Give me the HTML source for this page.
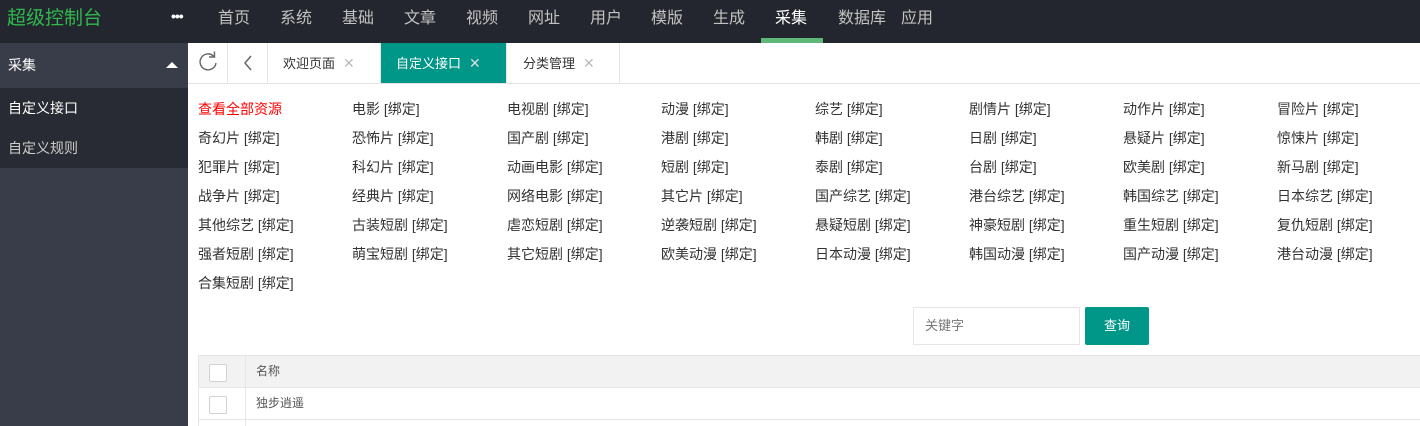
<!DOCTYPE html>
<html><head><meta charset="utf-8"><style>
*{margin:0;padding:0;box-sizing:border-box}
html,body{width:1420px;height:426px;overflow:hidden}
body{background:#fff;font-family:"Liberation Sans","Noto Sans CJK SC",sans-serif;position:relative}
.hd{position:absolute;left:0;top:0;width:1420px;height:43px;background:#23262e}
.logo{position:absolute;left:7px;top:3px;color:#2fb84d;font-size:19px}
.dots{position:absolute;left:171px;top:8px;color:#fff;font-size:14px;font-weight:bold;letter-spacing:-1px}
.nav{position:absolute;top:4px;color:#c2c2c2;font-size:16px}
.nav.on{color:#fff}
.ul{position:absolute;left:761px;top:38px;width:62px;height:5px;background:#5fb878}
.sb{position:absolute;left:0;top:43px;width:188px;height:383px;background:#393d49}
.sb .t{height:45px;color:#fff;font-size:14px;line-height:45px;padding-left:8px;position:relative}
.tri{position:absolute;right:10px;top:19px;width:0;height:0;border-left:6px solid transparent;border-right:6px solid transparent;border-bottom:6px solid #fff}
.sb .sub{background:#282b33;height:80px}
.sb .sub div{height:40px;line-height:40px;padding-left:8px;color:#fff;font-size:14px}
.sb .sub div+div{color:#ccc}
.tabs{position:absolute;left:188px;top:43px;width:1232px;height:41px;border-bottom:1px solid #e2e2e2}
.tb{position:absolute;top:0;height:40px;border-right:1px solid #e6e6e6;font-size:13px;color:#333;line-height:40px}
.tb .x{color:#bbb;font-size:14px;margin-left:8px}
.tb.on{background:#009688;color:#fff}
.tb.on .x{color:#ddd}
.g{position:absolute;font-size:14px;color:#333;white-space:nowrap}
.inp{position:absolute;left:913px;top:307px;width:167px;height:38px;border:1px solid #e6e6e6;font-size:13px;color:#777;line-height:36px;padding-left:11px}
.btn{position:absolute;left:1085px;top:307px;width:64px;height:38px;background:#009688;color:#fff;font-size:13px;line-height:38px;text-align:center;border-radius:2px}
.tbl{position:absolute;left:198px;top:355px;width:1222px;height:71px;overflow:hidden;border-top:1px solid #e6e6e6;border-left:1px solid #e6e6e6}
.row{height:32px;border-bottom:1px solid #e6e6e6;position:relative;font-size:12px;color:#555;line-height:31px}
.row.h{background:#f2f2f2}
.row .c{position:absolute;left:0;top:0;width:47px;height:31px;border-right:1px solid #e6e6e6}
.row .c i{position:absolute;left:10px;top:8px;width:18px;height:18px;border:1px solid #d2d2d2;background:#fff;border-radius:2px}
.row span{position:absolute;left:57px}
.row.last{height:7px;border-bottom:none}
.row.last .c{height:7px}
</style></head><body>
<div class="hd">
<div class="logo">超级控制台</div>
<div class="dots">•••</div>
<div class="nav" style="left:218px">首页</div>
<div class="nav" style="left:280px">系统</div>
<div class="nav" style="left:342px">基础</div>
<div class="nav" style="left:404px">文章</div>
<div class="nav" style="left:466px">视频</div>
<div class="nav" style="left:528px">网址</div>
<div class="nav" style="left:590px">用户</div>
<div class="nav" style="left:651px">模版</div>
<div class="nav" style="left:713px">生成</div>
<div class="nav on" style="left:775px">采集</div>
<div class="nav" style="left:838px">数据库</div>
<div class="nav" style="left:901px">应用</div>
<div class="ul"></div>
</div>
<div class="sb">
<div class="t">采集<i class="tri"></i></div>
<div class="sub"><div>自定义接口</div><div>自定义规则</div></div>
</div>
<div class="tabs">
<div class="tb" style="left:0;width:40px"><svg width="40" height="40" viewBox="0 0 40 40"><path d="M26 13.5A8 8 0 1 0 28 20" fill="none" stroke="#666" stroke-width="1.4"/><path d="M26.5 8.5V14H21" fill="none" stroke="#666" stroke-width="1.4"/></svg></div>
<div class="tb" style="left:40px;width:40px"><svg width="40" height="40" viewBox="0 0 40 40"><path d="M23 13L17 20L23 27" fill="none" stroke="#666" stroke-width="1.5"/></svg></div>
<div class="tb" style="left:80px;width:113px;padding-left:15px">欢迎页面<span class="x">✕</span></div>
<div class="tb on" style="left:193px;width:126px;padding-left:15px">自定义接口<span class="x">✕</span></div>
<div class="tb" style="left:319px;width:113px;padding-left:16px">分类管理<span class="x">✕</span></div>
</div>
<div id="grid"></div>
<div class="g" style="left:198px;top:99px;color:#f00">查看全部资源</div>
<div class="inp">关键字</div>
<div class="btn">查询</div>
<div class="tbl">
<div class="row h"><div class="c"><i></i></div><span>名称</span></div>
<div class="row"><div class="c"><i></i></div><span>独步逍遥</span></div>
<div class="row last"><div class="c"></div></div>
</div>
<script>
var items=["","电影","电视剧","动漫","综艺","剧情片","动作片","冒险片","奇幻片","恐怖片","国产剧","港剧","韩剧","日剧","悬疑片","惊悚片","犯罪片","科幻片","动画电影","短剧","泰剧","台剧","欧美剧","新马剧","战争片","经典片","网络电影","其它片","国产综艺","港台综艺","韩国综艺","日本综艺","其他综艺","古装短剧","虐恋短剧","逆袭短剧","悬疑短剧","神豪短剧","重生短剧","复仇短剧","强者短剧","萌宝短剧","其它短剧","欧美动漫","日本动漫","韩国动漫","国产动漫","港台动漫","合集短剧"];
var xs=[198,352,507,661,815,969,1123,1277],h="";
items.forEach(function(t,i){if(!t)return;h+='<div class="g" style="left:'+xs[i%8]+'px;top:'+(99+29*Math.floor(i/8))+'px">'+t+' [绑定]</div>';});
document.getElementById("grid").innerHTML=h;
</script>
</body></html>
